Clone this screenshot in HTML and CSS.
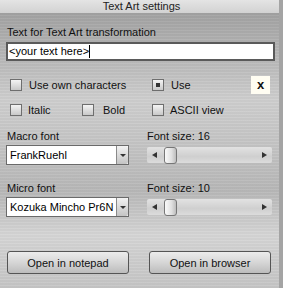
FILE: index.html
```html
<!DOCTYPE html>
<html lang="en">

<head>
    <meta charset="UTF-8">
    <title>Text Art settings</title>
    <link rel="stylesheet" href="styles.css">
</head>

<body>
    <div class="window">
        <div class="titlebar">Text Art settings</div>
        <div class="content">
            <div class="label">Text for Text Art transformation</div>
            <div class="text-input">&lt;your text here&gt;<span class="caret"></span></div>

            <div class="check-row row-one">
                <div class="check wide"><span class="box"></span>Use own characters</div>
                <div class="check"><span class="box checked"></span>Use</div>
                <div class="char-box">x</div>
            </div>
            <div class="check-row row-two">
                <div class="check"><span class="box"></span>Italic</div>
                <div class="check"><span class="box"></span>Bold</div>
                <div class="check"><span class="box"></span>ASCII view</div>
            </div>

            <div class="font-grid">
                <div class="label">Macro font</div>
                <div class="label">Font size: 16</div>
                <div class="select">FrankRuehl<span class="drop"></span></div>
                <div class="slider">
                    <span class="arrow left"></span>
                    <span class="thumb"></span>
                    <span class="arrow right"></span>
                </div>

                <div class="label gap">Micro font</div>
                <div class="label gap">Font size: 10</div>
                <div class="select">Kozuka Mincho Pr6N<span class="drop"></span></div>
                <div class="slider">
                    <span class="arrow left"></span>
                    <span class="thumb"></span>
                    <span class="arrow right"></span>
                </div>
            </div>

            <div class="buttons">
                <button>Open in notepad</button>
                <button>Open in browser</button>
            </div>
        </div>
    </div>
</body>

</html>
```

FILE: styles.css
```css
body {
    margin: 0;
    font-family: "Liberation Sans", Arial, sans-serif;
    font-size: 11px;
    color: #111;
}

.window {
    width: 283px;
    height: 288px;
    box-sizing: border-box;
    border-right: 4px solid #a4a4a4;
    background:
        repeating-linear-gradient(180deg, rgba(255, 255, 255, 0.10) 0px, rgba(255, 255, 255, 0) 1px, rgba(0, 0, 0, 0.05) 2px, rgba(255, 255, 255, 0) 3px),
        linear-gradient(180deg, #9c9c9c 0px, #b0b0b0 40px, #cfcfcf 100px, #c4c4c4 150px, #b8b8b8 190px, #d6d6d6 235px, #c6c6c6 288px);
    overflow: hidden;
}

.titlebar {
    height: 13px;
    line-height: 13px;
    text-align: center;
    font-size: 11px;
    color: #222;
    background: linear-gradient(180deg, #e4e4e4, #d2d2d2);
    margin-right: -4px;
}

.content {
    padding: 13px 4px 0 6px;
}

.label {
    height: 13px;
    line-height: 13px;
    padding-left: 1px;
}

.text-input {
    margin-top: 3px;
    height: 15px;
    line-height: 15px;
    border: 2px solid #5a5a5a;
    background: #fff;
    padding-left: 1px;
    color: #000;
    display: flex;
    align-items: center;
}

.caret {
    display: inline-block;
    width: 1px;
    height: 13px;
    background: #000;
}

.check-row {
    display: flex;
    align-items: center;
    padding-left: 4px;
}

.row-one {
    margin-top: 15px;
    height: 18px;
}

.row-two {
    margin-top: 10px;
    height: 12px;
}

.check {
    display: flex;
    align-items: center;
    width: 72px;
}

.check.wide {
    width: 142px;
}

.row-two .check:nth-child(2) {
    width: 70px;
}

.box {
    width: 10px;
    height: 10px;
    border: 1px solid #6e6e6e;
    background: linear-gradient(180deg, #f4f4f4, #c8c8c8);
    margin-right: 7px;
    display: flex;
    align-items: center;
    justify-content: center;
}

.box.checked::after {
    content: "";
    width: 4px;
    height: 4px;
    background: #333;
}

.row-two .box {
    margin-right: 6px;
}

.row-two .check:nth-child(2) .box {
    margin-right: 9px;
}

.char-box {
    margin-left: 27px;
    width: 19px;
    height: 18px;
    background: #fffdf2;
    text-align: center;
    line-height: 17px;
    font-weight: bold;
    font-size: 13px;
}

.font-grid {
    display: grid;
    grid-template-columns: 123px 125px;
    column-gap: 18px;
    margin-top: 14px;
}

.font-grid .label:nth-child(even) {
    padding-left: 0;
}

.font-grid .gap {
    margin-top: 17px;
}

.select {
    margin-top: 2px;
    height: 18px;
    border: 1px solid #6a6a6a;
    background: #fff;
    line-height: 18px;
    padding-left: 3px;
    display: flex;
    justify-content: space-between;
    color: #000;
}

.drop {
    width: 12px;
    height: 18px;
    box-sizing: border-box;
    border-left: 1px solid #8a8a8a;
    border-radius: 0 2px 2px 0;
    background: linear-gradient(180deg, #f2f2f2, #c4c4c4);
    display: flex;
    align-items: center;
    justify-content: center;
}

.drop::after {
    content: "";
    border-left: 3px solid transparent;
    border-right: 3px solid transparent;
    border-top: 3px solid #333;
}

.slider {
    margin-top: 4px;
    height: 16px;
    border-radius: 2px;
    background: linear-gradient(180deg, #e2e2e2, #cfcfcf 60%, #dcdcdc);
    position: relative;
    display: flex;
    align-items: center;
    justify-content: space-between;
    padding: 0 5px;
}

.arrow {
    width: 0;
    height: 0;
    border-top: 3px solid transparent;
    border-bottom: 3px solid transparent;
}

.arrow.left {
    border-right: 5px solid #333;
}

.arrow.right {
    border-left: 5px solid #333;
}

.thumb {
    position: absolute;
    left: 17px;
    top: 0;
    width: 11px;
    height: 15px;
    border: 1px solid #777;
    border-radius: 3px;
    background: linear-gradient(90deg, #fafafa, #e0e0e0 60%, #bdbdbd);
}

.buttons {
    display: flex;
    justify-content: space-between;
    margin-top: 34px;
    padding: 0 4px 0 1px;
}

button {
    width: 122px;
    height: 23px;
    border: 1px solid #555;
    border-radius: 3px;
    background: linear-gradient(180deg, #ececec, #d6d6d6 50%, #bcbcbc);
    font-family: "Liberation Sans", Arial, sans-serif;
    font-size: 11px;
    color: #111;
    padding: 0;
}
```
